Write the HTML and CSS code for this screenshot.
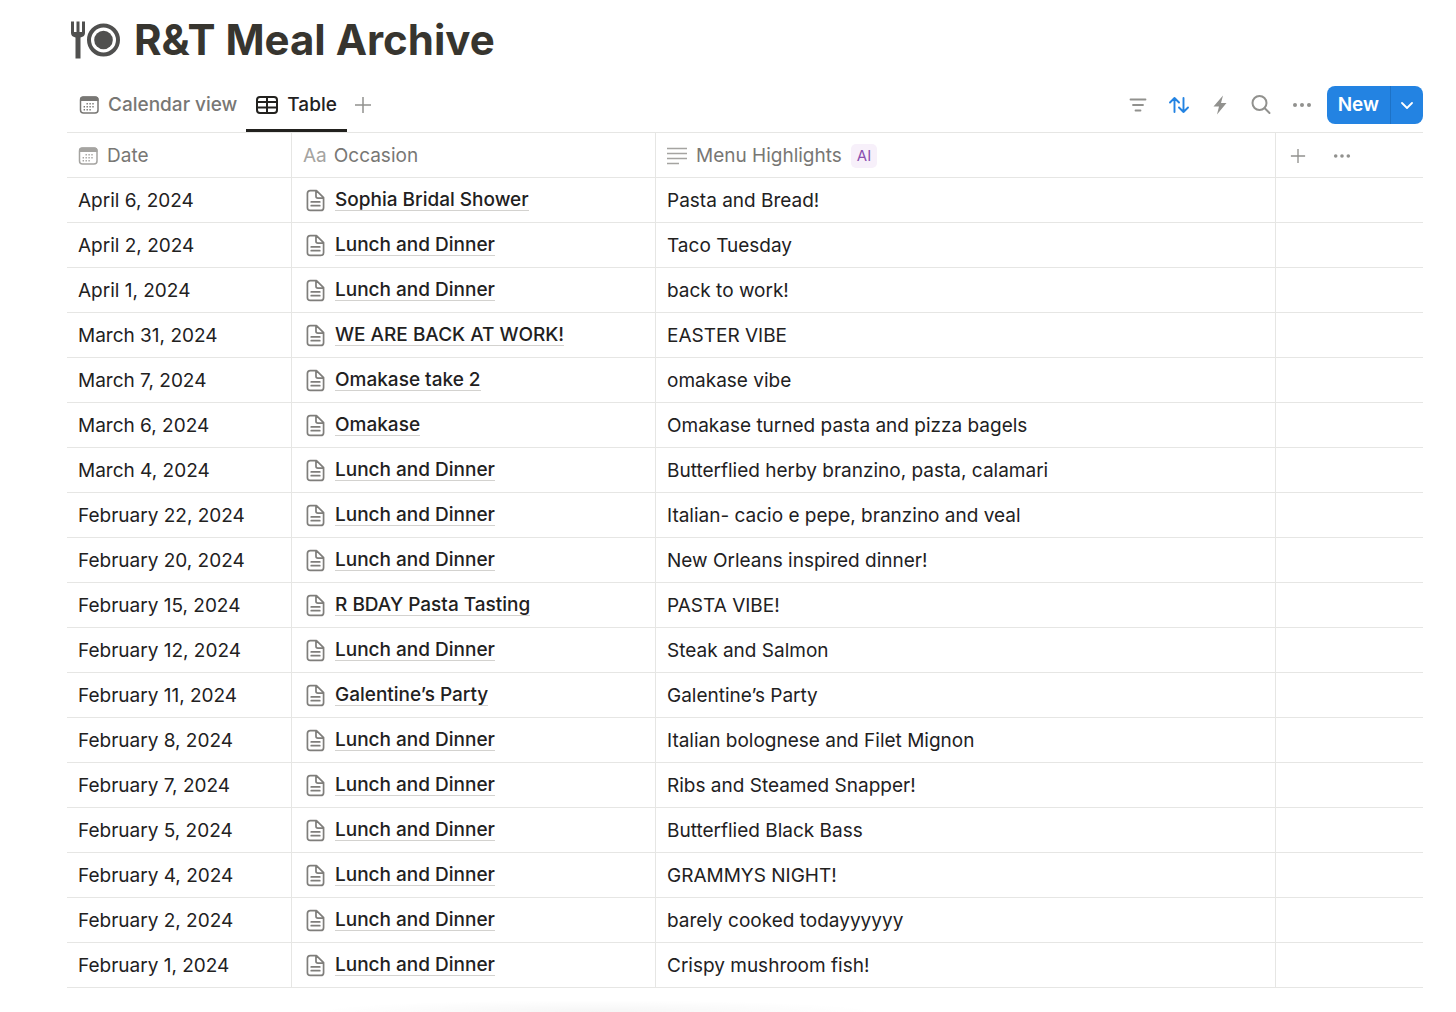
FILE: index.html
```html
<!DOCTYPE html>
<html lang="en">
<head>
<meta charset="utf-8">
<title>R&amp;T Meal Archive</title>
<meta name="viewport" content="width=device-width, initial-scale=1">
<link rel="stylesheet" href="styles.css">
</head>
<body>
<svg class="sprite" aria-hidden="true">
  <symbol id="calendar" viewBox="0 0 20 20">
    <rect x="1.500" y="2" width="17.500" height="16" rx="3" fill="none" stroke="currentColor" stroke-width="1.500"/>
    <path d="M1 6V4.500Q1 1.500 4 1.500H16.500Q19.500 1.500 19.500 4.500V6Z" fill="currentColor"/>
    <path d="M7.500 8.700H16.200M4.600 11.700H16.200M4.600 14.700H13.300" fill="none" stroke="currentColor" stroke-width="1.400" stroke-dasharray="1.400 1.500"/>
  </symbol>
  <symbol id="page" viewBox="0 0 20 24">
    <path d="M4.500 1.500H11L18.500 9V19.500Q18.500 22.500 15.500 22.500H4.500Q1.500 22.500 1.500 19.500V4.500Q1.500 1.500 4.500 1.500ZM10.500 1.500V7.500Q10.500 9.500 12.500 9.500H18.500M5.500 13.500H14.500M5.500 17.500H14.500" fill="none" stroke="currentColor" stroke-width="1.800" stroke-linejoin="round" stroke-linecap="round"/>
  </symbol>
  <symbol id="plus" viewBox="0 0 18 18">
    <path d="M9 1V17M1 9H17" fill="none" stroke="currentColor" stroke-width="1.500"/>
  </symbol>
  <symbol id="dots" viewBox="0 0 20 20">
    <circle cx="3" cy="10" r="2"/><circle cx="10" cy="10" r="2"/><circle cx="17" cy="10" r="2"/>
  </symbol>
</svg>
<main class="database">
  <header class="title">
    <svg class="title-icon" viewBox="0 0 50 38" aria-hidden="true">
      <path d="M0 .5H3V11H5.500V.5H8.500V11H11V.5H14V12Q14 15.500 9.500 16.500V37.500H4.500V16.500Q0 15.500 0 12Z" fill="currentColor"/>
      <circle cx="32.500" cy="19" r="14.500" fill="none" stroke="currentColor" stroke-width="4"/>
      <circle cx="32.500" cy="19" r="9.300" fill="currentColor"/>
    </svg>
    <h1>R&amp;T Meal Archive</h1>
  </header>
  <div class="toolbar">
    <nav class="views" aria-label="Views">
      <a class="view" href="#calendar-view"><svg class="icon"><use href="#calendar"/></svg>Calendar view</a>
      <a class="view active" href="#table-view" aria-current="page"><svg class="icon-table" viewBox="0 0 22 18" fill="none" stroke="currentColor" stroke-width="2"><rect x="1" y="1" width="20" height="16" rx="3"/><path d="M1 6H21M1 11.500H21M11 1V17"/></svg>Table</a>
      <button class="tool" type="button" aria-label="Add view"><svg class="icon-plus"><use href="#plus"/></svg></button>
    </nav>
    <div class="actions">
      <button class="tool" type="button" aria-label="Filter"><svg class="icon" viewBox="0 0 20 20" fill="none" stroke="currentColor" stroke-width="1.800" stroke-linecap="round"><path d="M2.500 4.500H17.500M5 10H15M7.500 15.500H12.500"/></svg></button>
      <button class="tool sort" type="button" aria-label="Sort"><svg class="icon" viewBox="0 0 20 20" fill="none" stroke="currentColor" stroke-width="1.900" stroke-linecap="round" stroke-linejoin="round"><path d="M5.500 17V3M1 7.500L5.500 3L10 7.500M14.500 3V17M10 12.500L14.500 17L19 12.500"/></svg></button>
      <button class="tool" type="button" aria-label="Automations"><svg class="icon" viewBox="0 0 20 20" fill="currentColor"><path d="M13 .5L3.500 11.500H9L7 19.500L16.500 8H11Z"/></svg></button>
      <button class="tool" type="button" aria-label="Search"><svg class="icon" viewBox="0 0 20 20" fill="none" stroke="currentColor" stroke-width="2" stroke-linecap="round"><circle cx="8.500" cy="8" r="7"/><path d="M13.500 13L18.500 18"/></svg></button>
      <button class="tool" type="button" aria-label="More options"><svg class="icon" fill="currentColor"><use href="#dots"/></svg></button>
      <div class="split">
        <button class="new" type="button">New</button>
        <button class="new-menu" type="button" aria-label="New options"><svg class="icon-chevron" viewBox="0 0 12 12" fill="none" stroke="currentColor" stroke-width="1.800" stroke-linecap="round" stroke-linejoin="round"><path d="M1 4L6 9L11 4"/></svg></button>
      </div>
    </div>
  </div>
  <table class="records">
    <colgroup><col class="col-date"><col class="col-occasion"><col class="col-menu"><col></colgroup>
    <thead>
      <tr>
        <th scope="col"><span class="head"><svg class="icon light"><use href="#calendar"/></svg>Date</span></th>
        <th scope="col"><span class="head"><span class="aa">Aa</span>Occasion</span></th>
        <th scope="col"><span class="head"><svg class="icon light" viewBox="0 0 20 20" fill="none" stroke="currentColor" stroke-width="1.500"><path d="M0 2.500H20M0 7.500H20M0 12.500H20M0 17.500H12"/></svg>Menu Highlights<span class="ai">AI</span></span></th>
        <td><span class="head tools"><button class="tool" type="button" aria-label="Add property"><svg class="icon-small"><use href="#plus"/></svg></button><button class="tool" type="button" aria-label="Property options"><svg class="icon-dots" fill="currentColor"><use href="#dots"/></svg></button></span></td>
      </tr>
    </thead>
    <tbody>
      <tr><td>April 6, 2024</td><td><a class="record" href="#r1"><svg class="icon-page"><use href="#page"/></svg><span>Sophia Bridal Shower</span></a></td><td>Pasta and Bread!</td><td></td></tr>
      <tr><td>April 2, 2024</td><td><a class="record" href="#r2"><svg class="icon-page"><use href="#page"/></svg><span>Lunch and Dinner</span></a></td><td>Taco Tuesday</td><td></td></tr>
      <tr><td>April 1, 2024</td><td><a class="record" href="#r3"><svg class="icon-page"><use href="#page"/></svg><span>Lunch and Dinner</span></a></td><td>back to work!</td><td></td></tr>
      <tr><td>March 31, 2024</td><td><a class="record" href="#r4"><svg class="icon-page"><use href="#page"/></svg><span>WE ARE BACK AT WORK!</span></a></td><td>EASTER VIBE</td><td></td></tr>
      <tr><td>March 7, 2024</td><td><a class="record" href="#r5"><svg class="icon-page"><use href="#page"/></svg><span>Omakase take 2</span></a></td><td>omakase vibe</td><td></td></tr>
      <tr><td>March 6, 2024</td><td><a class="record" href="#r6"><svg class="icon-page"><use href="#page"/></svg><span>Omakase</span></a></td><td>Omakase turned pasta and pizza bagels</td><td></td></tr>
      <tr><td>March 4, 2024</td><td><a class="record" href="#r7"><svg class="icon-page"><use href="#page"/></svg><span>Lunch and Dinner</span></a></td><td>Butterflied herby branzino, pasta, calamari</td><td></td></tr>
      <tr><td>February 22, 2024</td><td><a class="record" href="#r8"><svg class="icon-page"><use href="#page"/></svg><span>Lunch and Dinner</span></a></td><td>Italian- cacio e pepe, branzino and veal</td><td></td></tr>
      <tr><td>February 20, 2024</td><td><a class="record" href="#r9"><svg class="icon-page"><use href="#page"/></svg><span>Lunch and Dinner</span></a></td><td>New Orleans inspired dinner!</td><td></td></tr>
      <tr><td>February 15, 2024</td><td><a class="record" href="#r10"><svg class="icon-page"><use href="#page"/></svg><span>R BDAY Pasta Tasting</span></a></td><td>PASTA VIBE!</td><td></td></tr>
      <tr><td>February 12, 2024</td><td><a class="record" href="#r11"><svg class="icon-page"><use href="#page"/></svg><span>Lunch and Dinner</span></a></td><td>Steak and Salmon</td><td></td></tr>
      <tr><td>February 11, 2024</td><td><a class="record" href="#r12"><svg class="icon-page"><use href="#page"/></svg><span>Galentine’s Party</span></a></td><td>Galentine’s Party</td><td></td></tr>
      <tr><td>February 8, 2024</td><td><a class="record" href="#r13"><svg class="icon-page"><use href="#page"/></svg><span>Lunch and Dinner</span></a></td><td>Italian bolognese and Filet Mignon</td><td></td></tr>
      <tr><td>February 7, 2024</td><td><a class="record" href="#r14"><svg class="icon-page"><use href="#page"/></svg><span>Lunch and Dinner</span></a></td><td>Ribs and Steamed Snapper!</td><td></td></tr>
      <tr><td>February 5, 2024</td><td><a class="record" href="#r15"><svg class="icon-page"><use href="#page"/></svg><span>Lunch and Dinner</span></a></td><td>Butterflied Black Bass</td><td></td></tr>
      <tr><td>February 4, 2024</td><td><a class="record" href="#r16"><svg class="icon-page"><use href="#page"/></svg><span>Lunch and Dinner</span></a></td><td>GRAMMYS NIGHT!</td><td></td></tr>
      <tr><td>February 2, 2024</td><td><a class="record" href="#r17"><svg class="icon-page"><use href="#page"/></svg><span>Lunch and Dinner</span></a></td><td>barely cooked todayyyyyy</td><td></td></tr>
      <tr><td>February 1, 2024</td><td><a class="record" href="#r18"><svg class="icon-page"><use href="#page"/></svg><span>Lunch and Dinner</span></a></td><td>Crispy mushroom fish!</td><td></td></tr>
    </tbody>
  </table>
  <div class="bottom-shade"></div>
</main>
</body>
</html>
```
FILE: styles.css
```css
* { box-sizing: border-box; }

body {
  margin: 0;
  background: #fff;
  color: #22211e;
  font: 19px/24px Inter, "Liberation Sans", sans-serif;
}

a { color: inherit; text-decoration: none; }

button {
  border: 0;
  background: none;
  padding: 0;
  font: inherit;
  color: inherit;
  cursor: pointer;
}

svg { display: block; flex: none; }

.sprite { position: absolute; width: 0; height: 0; }
.icon { width: 20px; height: 20px; }
.icon-table { width: 22px; height: 18px; }
.icon-plus { width: 18px; height: 18px; }
.icon-small { width: 16px; height: 16px; }
.icon-dots { width: 18px; height: 18px; }
.icon-chevron { width: 12px; height: 12px; }
.icon-page { width: 19px; height: 23px; color: #7f7e7b; }

.database { padding: 12px 33px 0 67px; }

.title {
  display: flex;
  align-items: center;
  gap: 13px;
  padding-left: 4px;
  color: #37352f;
}
.title-icon { width: 50px; height: 38px; color: #50504f; }
.title h1 { margin: 0; font-size: 42px; line-height: 56px; font-weight: 700; }

.toolbar {
  display: flex;
  justify-content: space-between;
  height: 65px;
  padding-top: 10px;
  border-bottom: 1px solid #e6e6e4;
}

.views { display: flex; }
.view {
  display: flex;
  align-items: center;
  gap: 9px;
  padding: 2px 9px 0 12px;
  color: #787774;
  font-weight: 500;
  border-bottom: 3px solid transparent;
}
.view.active { color: #22211e; border-color: #22211e; padding: 2px 10px 0; }
.view + .tool { margin-left: 7px; }

.tool { display: flex; align-items: center; color: #91918e; }
.sort { color: #2383e2; }

.actions { display: flex; align-items: center; gap: 21px; }
.split {
  display: flex;
  height: 38px;
  margin-left: -6px;
  border-radius: 8px;
  background: #2383e2;
  color: #fff;
  overflow: hidden;
}
.new { padding: 0 11px; font-weight: 600; border-right: 1px solid #1d72c6; }
.new-menu { padding: 0 10px; }

.records { width: 100%; border-collapse: separate; border-spacing: 0; table-layout: fixed; }
.col-date { width: 225px; }
.col-occasion { width: 364px; }
.col-menu { width: 620px; }

.records th,
.records td {
  height: 45px;
  padding: 1px 11px 0;
  border-right: 1px solid #e6e6e4;
  border-bottom: 1px solid #e6e6e4;
  text-align: left;
  white-space: nowrap;
}
.records th { font-weight: 400; color: #787774; }
.records tr > :last-child { border-right: 0; }

.head { display: flex; align-items: center; gap: 9px; }
.light, .aa { color: #a5a4a1; }
.aa { margin-right: -2px; }
.ai {
  padding: 0 6px;
  border-radius: 5px;
  background: #f7f0fa;
  color: #8b51b0;
  font-size: 15px;
}
.tools { gap: 27px; padding-left: 3px; }

.record { display: flex; align-items: center; gap: 10px; padding-left: 3px; font-weight: 500; }
.record span { border-bottom: 1px solid #d3d2cf; line-height: 20px; }

/* Soft shade under the end of the list */
.bottom-shade {
  width: 42%;
  height: 24px;
  margin-left: 18%;
  background: radial-gradient(closest-side at 50% 100%, rgba(0, 0, 0, 0.03), transparent);
  background: radial-gradient(50% 50% at 50% 100%, rgba(0, 0, 0, 0.04), transparent);
}
```
